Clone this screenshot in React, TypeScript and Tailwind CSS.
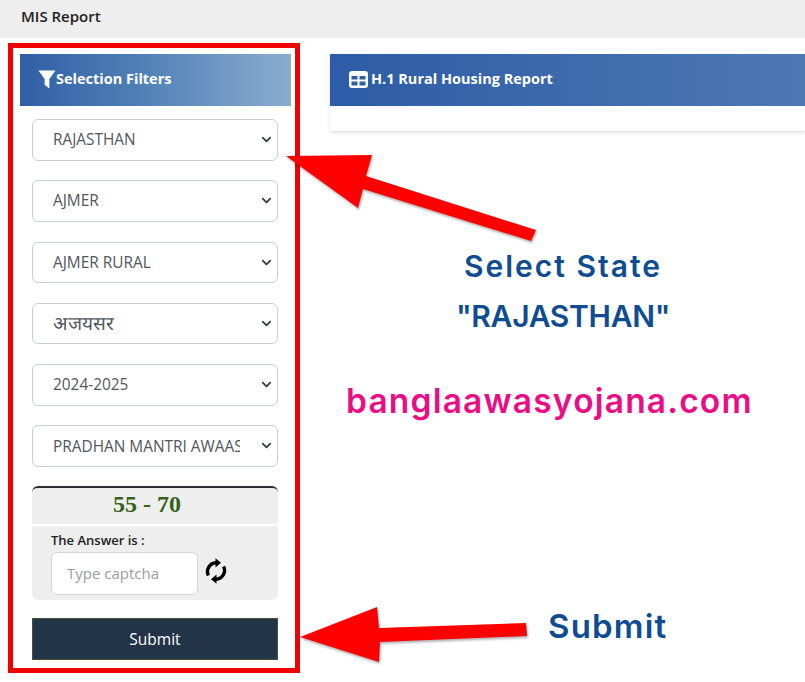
import { ChevronDown } from 'lucide-react';

const filters = ['RAJASTHAN', 'AJMER', 'AJMER RURAL', 'अजयसर', '2024-2025', 'PRADHAN MANTRI AWAAS YOJANA'];

function FilterSelect({ label, large }: { label: string; large?: boolean }) {
  return (
    <div className="relative">
      <select
        defaultValue={label}
        className={`block h-[41.5px] w-full appearance-none rounded-md border border-[#c9ced4] bg-white pl-[20px] pr-[37px] text-[#51575d] outline-none ${large ? 'text-[19px]' : 'text-[15.4px]'}`}
      >
        <option value={label}>{label}</option>
      </select>
      <ChevronDown className="pointer-events-none absolute right-[4px] top-[13px] h-[15px] w-[15px] text-[#343a40]" strokeWidth={2.8} />
    </div>
  );
}

export default function App() {
  return (
    <div className="relative h-[682px] w-[805px] overflow-hidden bg-white font-['Open_Sans',sans-serif]">
      <header className="flex h-[38px] items-start bg-[#eeeeee] pl-[21px] pt-[5px] text-[15px] font-semibold text-[#222]">
        MIS Report
      </header>

      <div className="flex pt-[16px]">
        <aside className="ml-[20px] w-[271px] shrink-0">
          <div className="flex h-[52px] items-center bg-gradient-to-r from-[#2f5fa4] via-[#5584b8] to-[#8aadd0] pb-[2px] pl-[18px] text-[14.5px] font-bold text-white">
            <svg viewBox="0 0 19 19" className="h-[19px] w-[18px] fill-white">
              <path d="M0.500 0H18.500L12 9V19L7 15V9Z" />
            </svg>
            Selection Filters
          </div>

          <div className="flex flex-col gap-[19.8px] pl-[12px] pr-[13px] pt-[13px]">
            {filters.map((f) => (
              <FilterSelect key={f} label={f} large={f === 'अजयसर'} />
            ))}
          </div>

          <div className="ml-[12px] mr-[13px] mt-[19px] h-[114px] overflow-hidden rounded-md border-t-2 border-[#2b2f36] bg-[#eeeeee]">
            <div className="flex h-[38px] items-center justify-center border-b-2 border-white pb-[3px] pr-[16px] font-['Liberation_Serif',serif] text-[24px] font-bold text-[#35621c]">
              55 - 70
            </div>
            <div className="pl-[19px] pt-[5px]">
              <div className="text-[13px] font-semibold leading-[18px] text-[#222]">The Answer is :</div>
              <div className="mt-[3px] flex items-center">
                <div className="flex h-[43px] w-[147px] items-center rounded-md border border-[#d3d6da] bg-white pl-[15px] pb-[1px] text-[15px] text-[#9a9ea3]">
                  Type captcha
                </div>
                <svg viewBox="0 0 22 26" className="mb-[4px] ml-[7px] h-[26px] w-[22px]" fill="none" stroke="#000" strokeWidth="3.400">
                  <path d="M3.400 17.500A8.800 8.800 0 0 1 11 4.800" />
                  <path d="M18.600 8.500A8.800 8.800 0 0 1 11 21.200" />
                  <path d="M10.500 0.200 16 4.800 10.500 9.400Z" fill="#000" stroke="none" />
                  <path d="M11.500 16.600 6 21.200 11.500 25.800Z" fill="#000" stroke="none" />
                </svg>
              </div>
            </div>
          </div>

          <button className="ml-[12px] mt-[18px] block h-[42px] w-[246px] border border-[#4b5233] bg-[#223448] pt-[1px] text-[15.5px] text-white">Submit</button>
        </aside>

        <main className="ml-[39px] flex-1">
          <div className="shadow-[0_2px_4px_rgba(0,0,0,0.12)]">
            <div className="flex h-[52px] items-center bg-gradient-to-r from-[#2c5ca6] to-[#4d78b2] pb-[2px] pl-[19px] text-[14.5px] font-bold text-white">
              <svg viewBox="0 0 19 17" className="mr-[3px] h-[17px] w-[19px] fill-white">
                <path fillRule="evenodd" d="M3 0h13a3 3 0 0 1 3 3v11a3 3 0 0 1-3 3H3a3 3 0 0 1-3-3V3a3 3 0 0 1 3-3zm-0.500 5v3.500h6V5zm8 0v3.500h6V5zm-8 5.500V14.500h6v-4zm8 0V14.500h6v-4z" />
              </svg>
              H.1 Rural Housing Report
            </div>
            <div className="h-[25px] bg-white" />
          </div>

          <div className="mt-[110px] pr-[9px] text-center font-['Inter',sans-serif] text-[#0f4c92]">
            <div className="text-[30px] font-semibold leading-[50px] tracking-[2px]">Select State</div>
            <div className="text-[30px] font-semibold leading-[50px] tracking-[-0.3px]">"RAJASTHAN"</div>
          </div>
          <div className="mt-[35px] pl-[16px] font-['Inter',sans-serif] text-[33.5px] font-semibold leading-[50px] tracking-[1.2px] text-[#ea0d85]">
            banglaawasyojana.com
          </div>
          <div className="ml-[218px] mt-[180px] font-['Inter',sans-serif] text-[33px] font-semibold leading-[40px] tracking-[1.2px] text-[#0f4c92]">
            Submit
          </div>
        </main>
      </div>

      {/* red annotation box and arrows drawn over the page */}
      <div className="pointer-events-none absolute left-[8px] top-[43px] h-[630px] w-[292px] border-[5px] border-[#f00000]" />
      <svg className="pointer-events-none absolute left-0 top-0 drop-shadow-[1px_2px_1px_rgba(0,0,0,0.3)]" width="805" height="682" viewBox="0 0 805 682">
        <polygon fill="#ff0000" points="286,156 372,155 366,176 536,230 531,241 363,189 358,208" />
        <polygon fill="#ff0000" points="300,637 377,607 379,628 526,623 527,636 380,642 379,662" />
      </svg>
    </div>
  );
}
